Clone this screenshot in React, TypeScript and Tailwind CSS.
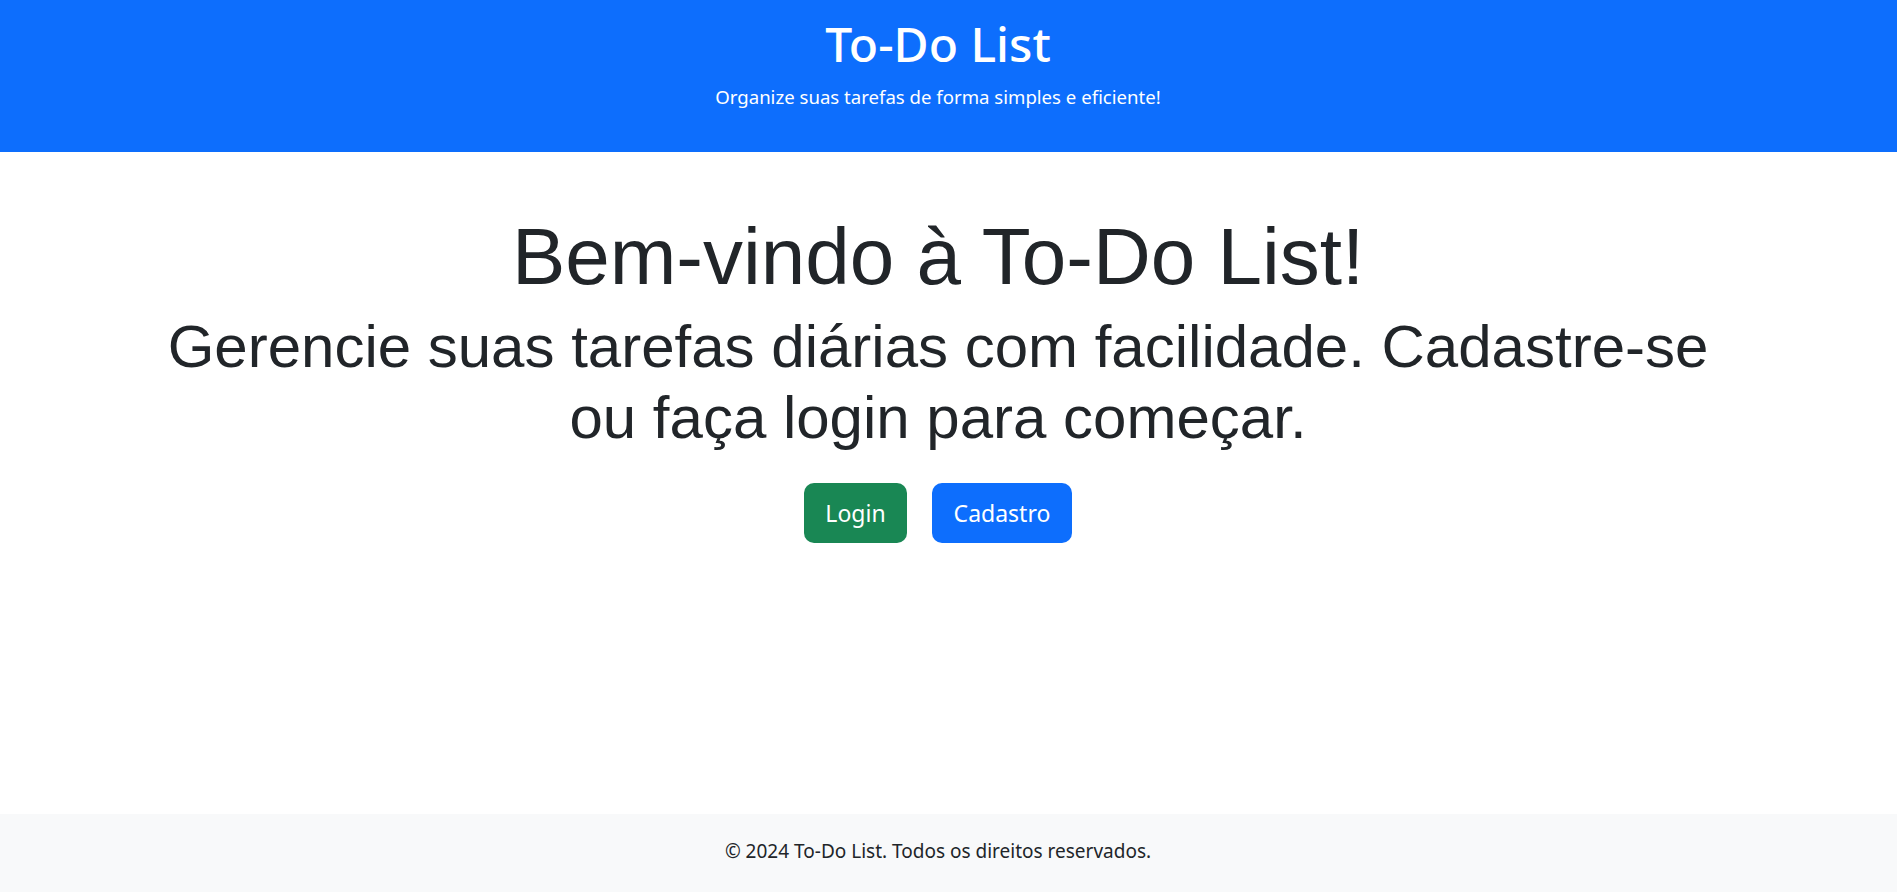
export default function App() {
  return (
    <div className="flex min-h-screen flex-col bg-white text-[#212529]">
      {/* cabeçalho */}
      <header className="bg-[#0d6efd] pt-[14px] pb-[40px] pr-[21px] text-center text-white" style={{ fontFamily: '"Noto Sans", "Open Sans", sans-serif' }}>
        <h1 className="text-[48px] font-medium leading-[60px]">To-Do List</h1>
        <p className="mt-[8px] text-[18.6px] leading-[30px]">Organize suas tarefas de forma simples e eficiente!</p>
      </header>

      <main className="pr-[21px]" style={{ fontFamily: '"Liberation Sans", Arial, sans-serif' }}>
        <div className="mx-auto w-full max-w-[1620px] pt-[57px] text-center">
          <h2 className="text-[80px] leading-[96px]">Bem-vindo à To-Do List!</h2>
          <p className="mt-[6px] text-[60px] leading-[71px]">
            Gerencie suas tarefas diárias com facilidade. Cadastre-se ou faça login para começar.
          </p>
          <div className="mt-[30px] flex justify-center gap-[25px]" style={{ fontFamily: '"Noto Sans", "Open Sans", sans-serif' }}>
            <button className="h-[60px] w-[103px] rounded-[10px] bg-[#198754] text-[23px] text-white">Login</button>
            <button className="h-[60px] w-[140px] rounded-[10px] bg-[#0d6efd] text-[23px] text-white">Cadastro</button>
          </div>
        </div>
      </main>

      <footer className="mt-auto h-[78px] bg-[#f8f9fa] pt-[22px] pr-[21px] text-center text-[19px] leading-[30px]" style={{ fontFamily: '"Noto Sans", "Open Sans", sans-serif' }}>
        © 2024 To-Do List. Todos os direitos reservados.
      </footer>
    </div>
  );
}
